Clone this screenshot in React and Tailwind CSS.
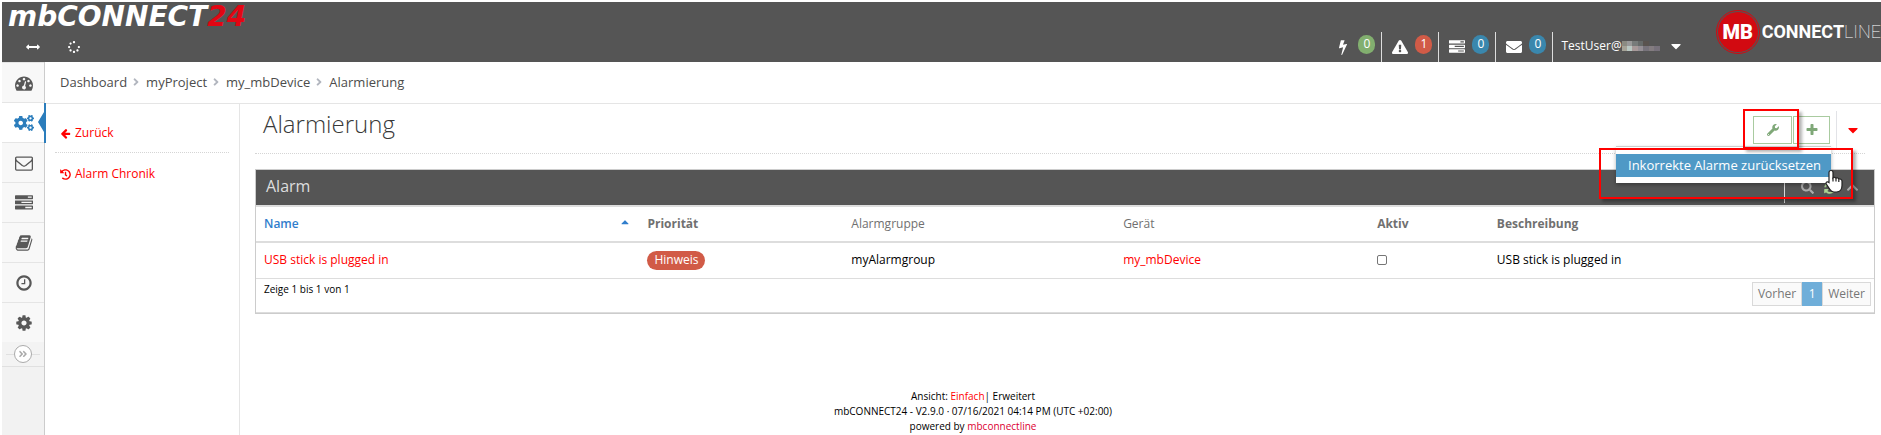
import React from 'react';
import {
  FaAngleDoubleRight,
  FaAngleRight,
  FaCaretDown,
  FaCaretUp,
  FaChevronUp,
  FaCogs,
  FaEnvelope,
  FaExclamationTriangle,
  FaHistory,
  FaSearch,
  FaSpinner,
  FaSyncAlt,
  FaWrench
} from 'react-icons/fa';

const Glyph = ({ path, className }) => (
  <svg viewBox="0 0 1792 1792" fill="currentColor" className={className} aria-hidden="true">
    <path d={path} />
  </svg>
);

const paths = {
  dashboard:
    'M384 1152q0-53-37.5-90.5t-90.5-37.5-90.5 37.5-37.5 90.5 37.5 90.5 90.5 37.5 90.5-37.5 37.5-90.5zm192-448q0-53-37.5-90.5t-90.5-37.5-90.5 37.5-37.5 90.5 37.5 90.5 90.5 37.5 90.5-37.5 37.5-90.5zm428 481l101-382q6-26-7.5-48.5t-38.5-29.5-48 6.5-30 39.5l-101 382q-60 5-107 43.5t-63 98.5q-20 77 20 146t117 89 146-20 89-117q16-60-6-117t-72-91zm660-33q0-53-37.5-90.5t-90.5-37.5-90.5 37.5-37.5 90.5 37.5 90.5 90.5 37.5 90.5-37.5 37.5-90.5zm-640-640q0-53-37.5-90.5t-90.5-37.5-90.5 37.5-37.5 90.5 37.5 90.5 90.5 37.5 90.5-37.5 37.5-90.5zm448 192q0-53-37.5-90.5t-90.5-37.5-90.5 37.5-37.5 90.5 37.5 90.5 90.5 37.5 90.5-37.5 37.5-90.5zm320 448q0 261-141 483-19 29-54 29h-1402q-35 0-54-29-141-221-141-483 0-182 71-348t191-286 286-191 348-71 348 71 286 191 191 286 71 348z',
  mail:
    'M1664 1504v-768q-32 36-69 66-268 206-426 338-51 43-83 67t-86.5 48.5-102.5 24.5h-2q-48 0-102.5-24.5t-86.5-48.5-83-67q-158-132-426-338-37-30-69-66v768q0 13 9.5 22.5t22.5 9.5h1472q13 0 22.5-9.5t9.5-22.5zm0-1051v-24.5l-.5-13-3-12.5-5.5-9-9-7.5-14-2.5h-1472q-13 0-22.5 9.5t-9.5 22.5q0 168 147 284 193 152 401 317 6 5 35 29.5t46 37.5 44.5 31.5 50.5 27.5 43 9h2q20 0 43-9t50.5-27.5 44.5-31.5 46-37.5 35-29.5q208-165 401-317 54-43 100.5-115.5t46.5-131.5zm128-37v1088q0 66-47 113t-113 47h-1472q-66 0-113-47t-47-113v-1088q0-66 47-113t113-47h1472q66 0 113 47t47 113z',
  tasks:
    'M1024 1408h640v-128h-640v128zm-384-512h1024v-128h-1024v128zm640-512h384v-128h-384v128zm512 832v256q0 26-19 45t-45 19h-1664q-26 0-45-19t-19-45v-256q0-26 19-45t45-19h1664q26 0 45 19t19 45zm0-512v256q0 26-19 45t-45 19h-1664q-26 0-45-19t-19-45v-256q0-26 19-45t45-19h1664q26 0 45 19t19 45zm0-512v256q0 26-19 45t-45 19h-1664q-26 0-45-19t-19-45v-256q0-26 19-45t45-19h1664q26 0 45 19t19 45z',
  book:
    'M1703 478q40 57 18 129l-275 906q-19 64-76.5 107.5t-122.5 43.5h-923q-77 0-148.5-53.5t-99.5-131.5q-24-67-2-127 0-4 3-27t4-37q1-8-3-21.5t-3-19.5q2-11 8-21t16.5-23.5 16.5-23.5q23-38 45-91.5t30-91.5q3-10 .5-30t-.5-28q3-11 17-28t17-23q21-36 42-92t25-90q1-9-2.5-32t.5-28q4-13 22-30.5t22-22.5q19-26 42.5-84.5t27.5-96.5q1-8-3-25.5t-2-26.5q2-8 9-18t18-23 17-21q8-12 16.5-30.5t15-35 16-36 19.5-32 26.5-23.5 36-11.5 47.5 5.5l-1 3q38-9 51-9h761q74 0 114 56t18 130l-274 906q-36 119-71.5 153.5t-128.5 34.5h-869q-27 0-38 15-11 16-1 43 24 70 144 70h923q29 0 56-15.5t35-41.5l300-987q7-22 5-57 38 15 59 43zm-1064 2q-4 13 2 22.5t20 9.5h608q13 0 25.5-9.5t16.5-22.5l21-64q4-13-2-22.5t-20-9.5h-608q-13 0-25.5 9.5t-16.5 22.5zm-83 256q-4 13 2 22.5t20 9.5h608q13 0 25.5-9.5t16.5-22.5l21-64q4-13-2-22.5t-20-9.5h-608q-13 0-25.5 9.5t-16.5 22.5z',
  clock:
    'M1024 544v448q0 14-9 23t-23 9h-320q-14 0-23-9t-9-23v-64q0-14 9-23t23-9h224v-352q0-14 9-23t23-9h64q14 0 23 9t9 23zm416 352q0-148-73-273t-198-198-273-73-273 73-198 198-73 273 73 273 198 198 273 73 273-73 198-198 73-273zm224 0q0 209-103 385.5t-279.5 279.5-385.5 103-385.5-103-279.5-279.5-103-385.5 103-385.5 279.5-279.5 385.5-103 385.5 103 279.5 279.5 103 385.5z',
  cog:
    'M1152 896q0-106-75-181t-181-75-181 75-75 181 75 181 181 75 181-75 75-181zm512-109v222q0 12-8 23t-20 13l-185 28q-19 54-39 91 35 50 107 138 10 12 10 25t-9 23q-27 37-99 108t-94 71q-12 0-26-9l-138-108q-44 23-91 38-16 136-29 186-7 28-36 28h-222q-14 0-24.5-8.5t-11.5-21.5l-28-184q-49-16-90-37l-141 107q-10 9-25 9-14 0-25-11-126-114-165-168-7-10-7-23 0-12 8-23 15-21 51-66.5t54-70.5q-27-50-41-99l-183-27q-13-2-21-12.5t-8-23.5v-222q0-12 8-23t19-13l186-28q14-46 39-92-40-57-107-138-10-12-10-24 0-10 9-23 26-36 98.5-107.5t94.5-71.5q13 0 26 10l138 107q44-23 91-38 16-136 29-186 7-28 36-28h222q14 0 24.5 8.5t11.5 21.5l28 184q49 16 90 37l142-107q9-9 24-9 13 0 25 10 129 119 165 170 7 8 7 22 0 12-8 23-15 21-51 66.5t-54 70.5q26 50 41 98l183 28q13 2 21 12.5t8 23.5z',
  bolt:
    'M1333 566q18 20 7 44l-540 1157q-13 25-42 25-4 0-14-2-17-5-25.5-19t-4.5-30l197-808-406 101q-4 1-12 1-18 0-31-11-18-15-13-39l201-825q4-14 16-23t28-9h328q19 0 32 12.5t13 29.5q0 8-5 18l-171 463 396-98q8-2 12-2 19 0 34 15z',
  arrows:
    'M1792 896q0 26-19 45l-256 256q-19 19-45 19t-45-19-19-45v-128h-1024v128q0 26-19 45t-45 19-45-19l-256-256q-19-19-19-45t19-45l256-256q19-19 45-19t45 19 19 45v128h1024v-128q0-26 19-45t45-19 45 19l256 256q19 19 19 45z',
  plus:
    'M1600 736v192q0 40-28 68t-68 28h-416v416q0 40-28 68t-68 28h-192q-40 0-68-28t-28-68v-416h-416q-40 0-68-28t-28-68v-192q0-40 28-68t68-28h416v-416q0-40 28-68t68-28h192q40 0 68 28t28 68v416h416q40 0 68 28t28 68z',
  back:
    'M1664 896v128q0 53-32.5 90.5t-84.5 37.5h-704l293 294q38 36 38 90t-38 90l-75 76q-37 37-90 37-52 0-91-37l-651-652q-37-37-37-90 0-52 37-91l651-650q38-38 91-38 52 0 90 38l75 74q38 38 38 91t-38 91l-293 293h704q52 0 84.5 37.5t32.5 90.5z'
};

const navItems = [
  { id: 'dashboard', label: 'Dashboard', icon: <Glyph path={paths.dashboard} className="w-[18px] h-[18px]" /> },
  { id: 'projects', label: 'Projekte', icon: <FaCogs className="w-5 h-5" />, active: true },
  { id: 'messages', label: 'Nachrichten', icon: <Glyph path={paths.mail} className="w-[18px] h-[18px]" /> },
  { id: 'tasks', label: 'Aufgaben', icon: <Glyph path={paths.tasks} className="w-[18px] h-[18px]" /> },
  { id: 'log', label: 'Logbuch', icon: <Glyph path={paths.book} className="w-[18px] h-[18px]" /> },
  { id: 'history', label: 'Verlauf', icon: <Glyph path={paths.clock} className="w-[18px] h-[18px]" /> },
  { id: 'settings', label: 'Einstellungen', icon: <Glyph path={paths.cog} className="w-[18px] h-[18px]" /> }
];

const counters = [
  { id: 'online', label: 'Online', icon: <Glyph path={paths.bolt} className="w-4 h-4" />, count: 0, color: 'bg-[#82af6f]' },
  { id: 'alarms', label: 'Alarme', icon: <FaExclamationTriangle className="w-4 h-4" />, count: 1, color: 'bg-[#d15b47]' },
  { id: 'jobs', label: 'Aufträge', icon: <Glyph path={paths.tasks} className="w-4 h-4" />, count: 0, color: 'bg-[#3a87ad]' },
  { id: 'mails', label: 'Nachrichten', icon: <FaEnvelope className="w-4 h-4" />, count: 0, color: 'bg-[#3a87ad]' }
];

const crumbs = ['Dashboard', 'myProject', 'my_mbDevice', 'Alarmierung'];

const columns = [
  { id: 'name', label: 'Name', className: 'w-[23.7%] font-semibold text-[#307ecc]', sorted: true },
  { id: 'priority', label: 'Priorität', className: 'w-[12.6%] font-bold' },
  { id: 'group', label: 'Alarmgruppe', className: 'w-[16.8%] font-normal' },
  { id: 'device', label: 'Gerät', className: 'w-[15.7%] font-normal' },
  { id: 'active', label: 'Aktiv', className: 'w-[7.4%] font-bold' },
  { id: 'description', label: 'Beschreibung', className: 'font-bold' }
];

const pixels = [
  'bg-[#8b8b82]', 'bg-[#999999]', 'bg-[#777b7a]', 'bg-[#666a69]', 'bg-[#59534f]', 'bg-[#555555]', 'bg-[#555555]',
  'bg-[#a6a397]', 'bg-[#b9c8c2]', 'bg-[#a79999]', 'bg-[#958f95]', 'bg-[#77737b]', 'bg-[#837c80]', 'bg-[#77717b]'
];

const Header = () => (
  <header className="flex justify-between h-[60px] bg-[#555555] text-white">
    <div className="flex flex-col pl-1.5">
      <a href="#home" className="font-['DejaVu_Sans',sans-serif] text-[28px] leading-[30px] font-bold italic">
        mbCONNECT<span className="text-[#e30613]">24</span>
      </a>
      <div className="flex items-center gap-7 pl-[18px] pt-2">
        <button aria-label="Breite umschalten"><Glyph path={paths.arrows} className="w-3.5 h-3.5" /></button>
        <button aria-label="Laden"><FaSpinner className="w-3 h-3" /></button>
      </div>
    </div>

    <div className="flex">
      <div className="flex items-end">
        {counters.map((item) => (
          <button
            key={item.id}
            aria-label={item.label}
            className="flex items-start gap-[7px] w-[57px] h-[30px] pl-2.5 pt-[3px] border-r border-[#dddddd]"
          >
            <span className="pt-1">{item.icon}</span>
            <span className={`w-[17px] h-[19px] rounded-full text-xs leading-[17px] text-center ${item.color}`}>
              {item.count}
            </span>
          </button>
        ))}
        <button className="flex items-center h-[30px] pl-2 pb-0.5 text-xs">
          <span>TestUser@</span>
          <span className="grid grid-cols-7 w-[38px]">
            {pixels.map((color, i) => (
              <span key={i} className={`h-[5px] ${color}`} />
            ))}
          </span>
          <FaCaretDown className="w-4 h-4 ml-2" />
        </button>
      </div>
      <a href="#mbconnectline" className="flex items-center h-[60px] pl-8 font-[Roboto,sans-serif] text-[18px]">
        <span className="w-11 h-11 rounded-full border border-[#d20a11] p-px">
          <span className="flex items-center justify-center h-full rounded-full bg-[#d20a11] text-xl font-black">MB</span>
        </span>
        <span className="pl-0.5 font-bold">CONNECT</span>
        <span className="font-thin">LINE</span>
      </a>
    </div>
  </header>
);

const Sidebar = () => (
  <nav className="w-[43px] shrink-0 bg-[#f2f2f2] border-r border-[#cccccc]">
    {navItems.map((item) => (
      <a
        key={item.id}
        href={`#${item.id}`}
        aria-label={item.label}
        className={`relative flex items-center justify-center h-10 pl-0.5 border-t border-[#e5e5e5] ${
          item.active ? 'bg-white text-[#2b7dbc]' : 'bg-[#f8f8f8] text-[#585858]'
        }`}
      >
        {item.icon}
        {item.active && (
          <svg viewBox="0 0 8 40" className="absolute -right-0.5 top-0 w-2 h-10" fill="#2b7dbc" aria-hidden="true">
            <path d="M6 0h2v40H6zM6 9v20L0 19z" />
          </svg>
        )}
      </a>
    ))}
    <div className="flex items-center h-[25px] px-1 border-b border-[#e0e0e0] bg-[#f3f3f3]">
      <span className="flex-1 h-px bg-[#e0e0e0]" />
      <button
        aria-label="Menü ausklappen"
        className="flex items-center justify-center w-[18px] h-[18px] rounded-full border border-[#aaaaaa] bg-white text-[#aaaaaa]"
      >
        <FaAngleDoubleRight className="w-2.5 h-2.5" />
      </button>
      <span className="flex-1 h-px bg-[#e0e0e0]" />
    </div>
  </nav>
);

const Toolbar = () => (
  <div className="relative flex items-center mt-px pr-1">
    <button
      aria-label="Werkzeuge"
      className="flex items-center justify-center w-[39px] h-7 mr-px border border-[#a9cba0] text-[#7fa878]"
    >
      <FaWrench className="w-3 h-3" />
    </button>
    <button
      aria-label="Neu"
      className="flex items-center justify-center w-[37px] h-7 border border-[#a9cba0] text-[#7fa878]"
    >
      <Glyph path={paths.plus} className="w-3.5 h-3.5" />
    </button>
    <span className="w-px h-[38px] ml-1.5 bg-[#e2e3e7]" />
    <button aria-label="Mehr" className="ml-2 text-[#ff0000]">
      <FaCaretDown className="w-4 h-4" />
    </button>

    {/* Tool menu */}
    <div className="absolute right-[34px] top-[35px] z-10 w-[215px] pt-[7px] pb-1.5 bg-white border-t border-[#cccccc] shadow-[0_2px_4px_rgba(0,0,0,0.3)]">
      <button className="block w-full h-[23px] pl-3 text-left whitespace-nowrap leading-[23px] bg-[#4f99c6] text-white">
        Inkorrekte Alarme zurücksetzen
      </button>
    </div>

    {/* Highlight frames and pointer */}
    <div className="absolute right-[66px] -top-0.5 z-20 w-14 h-10 border-2 border-[#ff0000] shadow-[3px_3px_3px_rgba(0,0,0,0.3)]" />
    <div className="absolute right-3 top-[37px] z-20 w-[254px] h-[51px] border-2 border-[#ff0000] shadow-[3px_3px_3px_rgba(0,0,0,0.3)]" />
    <svg viewBox="0 0 18 24" className="absolute right-[22px] top-[58px] z-30 w-[18px] h-6" aria-hidden="true">
      <path
        d="M6 1.5c1.300 0 2 .8 2 2v5.200c.4-.6 2.500-.7 3 .6.8-.6 2.500-.4 2.800.9 1.300-.5 3.200 0 3.200 2v4.300c0 3.500-2 6.500-5.500 6.500H9c-2 0-3.200-1-4.200-2.600L1.300 15c-.8-1.600 1-3 2.700-1.500V3.500c0-1.200.8-2 2-2z"
        fill="white"
        stroke="#222222"
        strokeWidth="1.200"
      />
      <path d="M8 8.500v4M11 9.500v3M13.800 10.500v2.500" stroke="#222222" strokeWidth="1.200" />
    </svg>
  </div>
);

const AlarmTable = () => (
  <section className="border border-[#cccccc] text-xs text-black">
    <div className="flex items-center justify-between h-[35px] pl-2.5 pr-[15px] bg-[#555555] text-[#dddddd]">
      <h2 className="pb-1 text-base font-normal">Alarm</h2>
      <div className="flex items-center gap-2.5 h-full">
        <span className="w-px h-[31px] mr-1.5 bg-[#d9d9d9]" />
        <button aria-label="Suchen" className="text-[#aaaaaa]"><FaSearch className="w-[13px] h-[13px]" /></button>
        <button aria-label="Aktualisieren" className="text-[#acd392]"><FaSyncAlt className="w-3 h-3" /></button>
        <button aria-label="Einklappen" className="text-[#aaaaaa]"><FaChevronUp className="w-[13px] h-[13px]" /></button>
      </div>
    </div>
    <table className="w-full table-fixed border-t-2 border-[#dddddd]">
      <thead>
        <tr className="h-9 border-b-2 border-[#dddddd] text-left text-[#707070]">
          {columns.map((col) => (
            <th key={col.id} className={`px-2 ${col.className}`}>
              {col.sorted ? (
                <span className="flex items-start justify-between">
                  {col.label}
                  <FaCaretUp className="w-3 h-3" />
                </span>
              ) : (
                col.label
              )}
            </th>
          ))}
        </tr>
      </thead>
      <tbody>
        <tr className="h-9 border-b border-[#dddddd]">
          <td className="px-2"><a href="#alarm" className="text-[#ff0000]">USB stick is plugged in</a></td>
          <td className="px-2">
            <span className="inline-block h-[19px] px-[7px] rounded-full bg-[#d15b47] leading-[18px] text-white">Hinweis</span>
          </td>
          <td className="px-2">myAlarmgroup</td>
          <td className="px-2"><a href="#device" className="text-[#ff0000]">my_mbDevice</a></td>
          <td className="px-2">
            <input
              type="checkbox"
              aria-label="Aktiv"
              className="block appearance-none w-2.5 h-2.5 rounded-[2px] border border-[#767676] bg-white"
            />
          </td>
          <td className="px-2">USB stick is plugged in</td>
        </tr>
      </tbody>
    </table>
    <div className="flex items-start justify-between pl-2 pr-[3px] pt-[3px] pb-1.5 border-b border-[#dddddd]">
      <span className="text-[10px] leading-[14px]">Zeige 1 bis 1 von 1</span>
      <div className="flex text-[#777777]">
        <button className="h-6 px-[5px] border border-[#d9d9d9] bg-[#fafafa]">Vorher</button>
        <button className="h-6 w-5 bg-[#6faed9] text-white">1</button>
        <button className="h-6 px-[5px] border border-[#d9d9d9] bg-[#fafafa]">Weiter</button>
      </div>
    </div>
  </section>
);

const App = () => (
  <div className="flex flex-col min-h-screen pt-0.5 pl-0.5 overflow-hidden bg-white font-['Open_Sans',sans-serif] text-[13px] leading-5 text-[#393939]">
    <Header />
    <div className="flex flex-1">
      <Sidebar />
      <div className="flex flex-col flex-1">
        <nav aria-label="Breadcrumb" className="flex items-center h-[42px] pl-[15px] pb-0.5 border-b border-[#e5e5e5] text-[#4c4c4c]">
          {crumbs.map((crumb, i) => (
            <span key={crumb} className="flex items-center">
              {i > 0 && <FaAngleRight className="w-3 h-3 ml-[3px] mr-1 text-[#b2b6bf]" />}
              <a href={`#${crumb}`}>{crumb}</a>
            </span>
          ))}
        </nav>

        <div className="flex flex-1">
          <aside className="w-[195px] shrink-0 px-2.5 border-r border-[#e5e5e5] text-xs text-[#ff0000]">
            <a href="#back" className="flex items-center gap-1 h-[49px] pl-[5px] pt-2.5 border-b border-dotted border-[#d5d5d5]">
              <Glyph path={paths.back} className="w-[11px] h-[11px]" />
              Zurück
            </a>
            <a href="#chronik" className="flex items-center gap-1 h-[42px] pl-[5px]">
              <FaHistory className="w-[11px] h-[11px]" />
              Alarm Chronik
            </a>
          </aside>

          <main className="flex-1 pl-[15px] pr-1.5">
            <div className="flex items-start justify-between h-[50px] mr-2.5 pt-1.5 mb-[15px] border-b border-dotted border-[#d5d5d5]">
              <h1 className="pl-2 text-2xl leading-7 font-light">Alarmierung</h1>
              <Toolbar />
            </div>
            <AlarmTable />
            <footer className="pt-[75px] pr-[184px] text-center text-[10px] leading-[15px] text-black">
              <p>Ansicht: <a href="#simple" className="text-[#ff0000]">Einfach</a>| Erweitert</p>
              <p>mbCONNECT24 - V2.9.0 · 07/16/2021 04:14 PM (UTC +02:00)</p>
              <p>powered by <a href="#vendor" className="text-[#dc0032]">mbconnectline</a></p>
            </footer>
          </main>
        </div>
      </div>
    </div>
  </div>
);

export default App;
